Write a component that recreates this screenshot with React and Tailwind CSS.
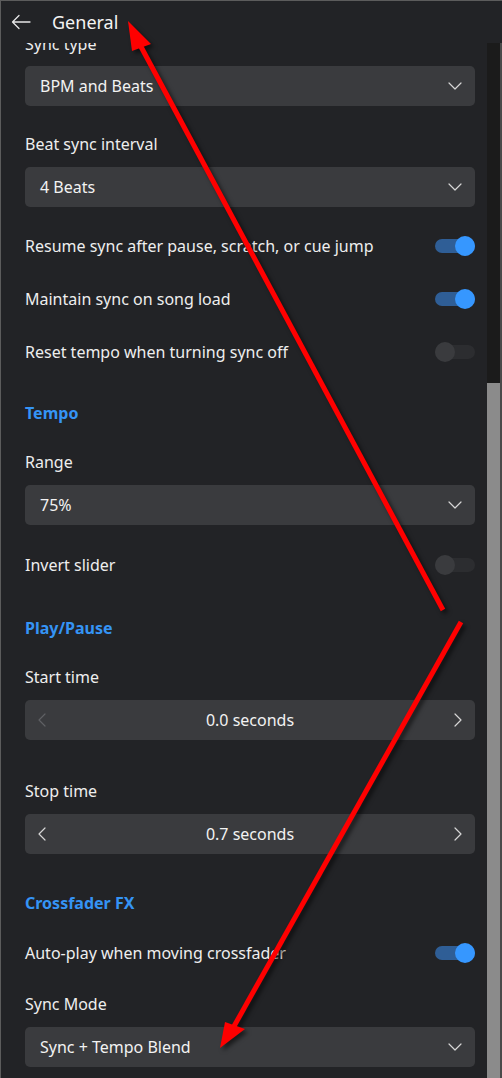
import React from 'react';

const Chevron = ({ dir = 'down', dim = false }) => {
  const paths = {
    down: 'M2 5l6 6 6-6',
    left: 'M10 2L4 8l6 6',
    right: 'M6 2l6 6-6 6',
  };
  return (
    <svg width="16" height="16" viewBox="0 0 16 16" fill="none">
      <path d={paths[dir]} stroke={dim ? '#5f6064' : '#d6d6d6'} strokeWidth="1.2" strokeLinecap="round" strokeLinejoin="round" />
    </svg>
  );
};

const Toggle = ({ on }) => (
  <div className="relative w-[40px] h-[20px] flex items-center shrink-0">
    <div className={`w-full h-[14px] rounded-full ${on ? 'bg-[#2f5e96]' : 'bg-[#2c2d30]'}`} />
    <div
      className={`absolute top-0 w-[20px] h-[20px] rounded-full ${on ? 'right-0 bg-[#3697ff]' : 'left-0 bg-[#3a3b3e]'}`}
    />
  </div>
);

const Select = ({ value }) => (
  <div className="h-[40px] rounded-[5px] bg-[#3a3b3e] flex items-center justify-between pl-[15px] pr-[12px]">
    <span className="text-[16px] text-[#f2f2f2]">{value}</span>
    <Chevron />
  </div>
);

const Stepper = ({ value, leftDim }) => (
  <div className="h-[40px] rounded-[5px] bg-[#3a3b3e] flex items-center justify-between px-[10px]">
    <Chevron dir="left" dim={leftDim} />
    <span className="text-[16px] text-[#f2f2f2]">{value}</span>
    <Chevron dir="right" />
  </div>
);

const Label = ({ children, className = '' }) => (
  <div className={`text-[16px] text-[#eeeeee] leading-[22px] ${className}`}>{children}</div>
);

const ToggleRow = ({ label, on }) => (
  <div className="h-[53px] flex items-center justify-between">
    <Label>{label}</Label>
    <Toggle on={on} />
  </div>
);

const Heading = ({ children }) => (
  <div className="text-[16px] font-bold text-[#3594f5] leading-[22px]">{children}</div>
);

export default function App() {
  return (
    <div
      className="relative w-[502px] h-[1078px] overflow-hidden bg-[#222326] border-l border-t border-[#5c5c5c]"
      style={{ fontFamily: '"Noto Sans", "Open Sans", sans-serif' }}
    >
      {/* header */}
      <div className="h-[42px] flex items-center">
        <svg className="ml-[10px]" width="20" height="16" viewBox="0 0 20 16" fill="none">
          <path d="M19 8H2M8 1.5L1.5 8 8 14.5" stroke="#e6e6e6" strokeWidth="1.3" strokeLinecap="round" strokeLinejoin="round" />
        </svg>
        <span className="ml-[21px] text-[18px] text-[#f4f4f4]">General</span>
      </div>

      <div className="flex h-[1036px]">
        {/* scrolling content, scrolled a little so the first label is cut */}
        <div className="flex-1 overflow-hidden pl-[24px] pr-[12px]">
          <div className="-mt-[10px]">
            <Label className="mb-[11px]">Sync type</Label>
            <Select value="BPM and Beats" />
            <Label className="mt-[27px] mb-[12px]">Beat sync interval</Label>
            <Select value="4 Beats" />
            <div className="mt-[12px]">
              <ToggleRow label="Resume sync after pause, scratch, or cue jump" on />
              <ToggleRow label="Maintain sync on song load" on />
              <ToggleRow label="Reset tempo when turning sync off" on={false} />
            </div>
            <div className="mt-[24px]"><Heading>Tempo</Heading></div>
            <Label className="mt-[27px] mb-[12px]">Range</Label>
            <Select value="75%" />
            <div className="mt-[13px]">
              <ToggleRow label="Invert slider" on={false} />
            </div>
            <div className="mt-[26px]"><Heading>Play/Pause</Heading></div>
            <Label className="mt-[27px] mb-[12px]">Start time</Label>
            <Stepper value="0.0 seconds" leftDim />
            <Label className="mt-[40px] mb-[12px]">Stop time</Label>
            <Stepper value="0.7 seconds" />
            <div className="mt-[38px]"><Heading>Crossfader FX</Heading></div>
            <div className="mt-[12px]">
              <ToggleRow label="Auto-play when moving crossfader" on />
            </div>
            <Label className="mt-[14px] mb-[12px]">Sync Mode</Label>
            <Select value="Sync + Tempo Blend" />
          </div>
        </div>
        {/* scrollbar */}
        <div className="w-[13px] flex flex-col bg-[#1b1b1b]">
          <div className="h-[340px]" />
          <div className="flex-1 bg-[#8b8b8b]" />
        </div>
        <div className="w-[2px] bg-[#4a4a4a]" />
      </div>

      {/* red annotation arrows */}
      <svg className="absolute left-0 top-0 pointer-events-none" width="502" height="1078" style={{ filter: 'drop-shadow(3px 3px 2px rgba(0,0,0,0.55))' }}>
        <line x1="442" y1="609" x2="138" y2="42" stroke="#ff0000" strokeWidth="5" />
        <polygon points="127,20 150,43 131,50" fill="#ff0000" />
        <line x1="460" y1="621" x2="232" y2="1027" stroke="#ff0000" strokeWidth="5" />
        <polygon points="219,1047 224,1021 244,1028" fill="#ff0000" />
      </svg>
    </div>
  );
}
